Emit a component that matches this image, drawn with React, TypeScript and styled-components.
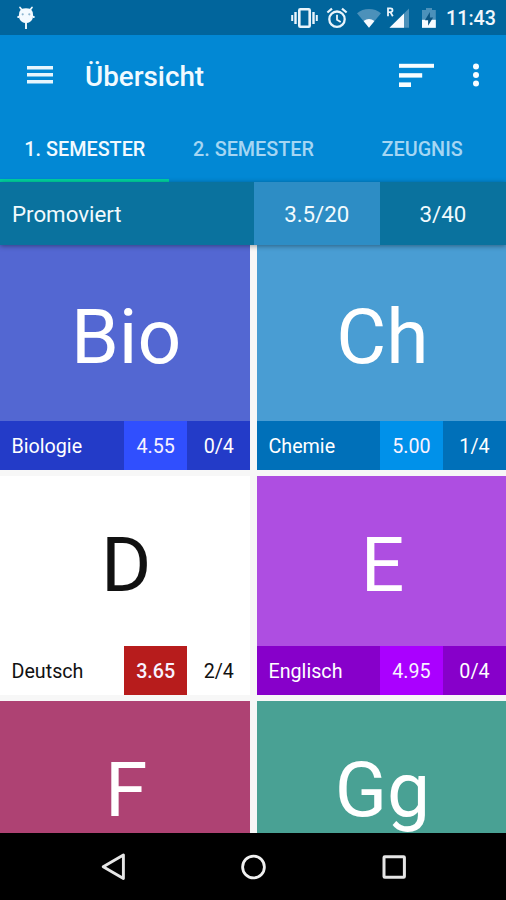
import React from 'react';
import styled, { createGlobalStyle } from 'styled-components';

const GlobalStyle = createGlobalStyle`
  * { box-sizing: border-box; }
  html, body { margin: 0; padding: 0; background: #000; }
  body { font-family: Roboto, "Liberation Sans", sans-serif; overflow: hidden; }
`;

const Screen = styled.div`
  width: 506px;
  height: 900px;
  display: flex;
  flex-direction: column;
  background: #f7f7f7;
  overflow: hidden;
`;

const StatusBar = styled.header`
  height: 35.4px;
  flex: none;
  display: flex;
  align-items: center;
  padding: 0 11px 0 17px;
  background: #01659c;
  color: #f1f7fc;
`;

const Spacer = styled.div`
  flex: 1;
`;

const Icon = styled.svg<{ $left?: number }>`
  display: block;
  flex: none;
  margin-left: ${({ $left = 0 }) => $left}px;
`;

const Clock = styled.span`
  width: 49px;
  margin-left: 9px;
  font-size: 19.7px;
  font-weight: 500;
  line-height: 36px;
  padding-top: 2px;
  white-space: nowrap;
`;

const Toolbar = styled.div`
  height: 79.6px;
  flex: none;
  display: flex;
  align-items: center;
  padding: 0 26px 0 27px;
  background: #0288d4;
  color: #f1faff;
`;

const Title = styled.h1`
  flex: 1;
  margin: 0 0 0 32px;
  padding-top: 4px;
  font-size: 27.8px;
  line-height: 32px;
  font-weight: 500;
`;

const Tabs = styled.nav`
  height: 67px;
  flex: none;
  display: grid;
  grid-template-columns: repeat(3, 1fr);
  background: #0288d4;
`;

const Tab = styled.div<{ $active?: boolean }>`
  display: flex;
  justify-content: center;
  align-items: center;
  padding: ${({ $active }) => ($active ? 5 : 2)}px 0 0 1px;
  border-bottom: ${({ $active }) => ($active ? '3px solid #00d2a0' : '0')};
  color: ${({ $active }) => ($active ? '#f2faff' : '#a5d6f3')};
  font-size: 19.8px;
  font-weight: 500;
  white-space: nowrap;
`;

const Summary = styled.section`
  height: 63px;
  flex: none;
  display: grid;
  grid-template-columns: 253.6px 126.4px 1fr;
  background: #0a729e;
  color: #f1fafd;
  font-size: 22.3px;
  position: relative;
  z-index: 1;
  box-shadow: 0 1px 5px rgba(0, 0, 0, 0.4);
`;

const SummaryCell = styled.div<{ $kind?: 'label' | 'highlight' }>`
  display: flex;
  align-items: center;
  justify-content: ${({ $kind }) => ($kind === 'label' ? 'flex-start' : 'center')};
  padding: 2px 0 0 ${({ $kind }) => ($kind === 'label' ? 12 : 0)}px;
  background: ${({ $kind }) => ($kind === 'highlight' ? '#2d8dc5' : 'transparent')};
`;

const SubjectGrid = styled.main`
  flex: 1;
  min-height: 0;
  overflow: hidden;
  display: grid;
  grid-template-columns: 250.3px 249px;
  grid-template-rows: 225px 219px 219px;
  gap: 6px 6.7px;
`;

const Tile = styled.article<{ $bg: string; $fg: string }>`
  display: flex;
  flex-direction: column;
  background: ${({ $bg }) => $bg};
  color: ${({ $fg }) => $fg};
`;

const Abbreviation = styled.div`
  flex: 1;
  display: flex;
  align-items: center;
  justify-content: center;
  padding: 8px 0 0 2px;
  font-size: 76.8px;
  line-height: 90px;
`;

const TileFooter = styled.footer<{ $bg: string }>`
  height: 49px;
  display: grid;
  grid-template-columns: 1fr 63.2px 63px;
  background: ${({ $bg }) => $bg};
  font-size: 19.7px;
`;

const SubjectName = styled.div`
  display: flex;
  align-items: center;
  padding: 3px 0 0 11.5px;
`;

const Value = styled.div<{ $bg?: string; $strong?: boolean }>`
  display: flex;
  align-items: center;
  justify-content: center;
  padding-top: 3px;
  background: ${({ $bg = 'transparent' }) => $bg};
  color: ${({ $bg }) => ($bg ? '#f8f2ff' : 'inherit')};
  font-weight: ${({ $strong }) => ($strong ? 500 : 400)};
`;

const NavigationBar = styled.footer`
  height: 66.6px;
  flex: none;
  display: flex;
  align-items: center;
  justify-content: space-between;
  padding: 0 98px;
  background: #000;
`;

type Result = {
  name: string;
  grade: string;
  tests: string;
  failing?: boolean;
};

type Subject = {
  short: string;
  bg: string;
  bar: string;
  accent: string;
  fg?: string;
  result?: Result;
};

const subjects: Subject[] = [
  { short: 'Bio', bg: '#5367d2', bar: '#233bc8', accent: '#304ffe', result: { name: 'Biologie', grade: '4.55', tests: '0/4' } },
  { short: 'Ch', bg: '#499dd3', bar: '#0070b9', accent: '#0091ea', result: { name: 'Chemie', grade: '5.00', tests: '1/4' } },
  { short: 'D', bg: '#ffffff', bar: '#ffffff', accent: '#b71c1c', fg: '#111111', result: { name: 'Deutsch', grade: '3.65', tests: '2/4', failing: true } },
  { short: 'E', bg: '#ae4ee1', bar: '#8700ca', accent: '#aa00ff', result: { name: 'Englisch', grade: '4.95', tests: '0/4' } },
  { short: 'F', bg: '#ae4273', bar: '#9b1150', accent: '#c51162' },
  { short: 'Gg', bg: '#49a194', bar: '#009078', accent: '#00bfa5' },
];

const AndroidFace = () => (
  <Icon width="18" height="24" viewBox="0 0 18 24" fill="#f4faff">
    <path d="M3 1.5 5 4M15 1.5 13 4" stroke="#f4faff" strokeWidth="1.7" strokeLinecap="round" />
    <path d="M4.2 3Q9 1.7 13.8 3Q16.3 5.5 16.2 9.8Q15.7 16.5 9 17.3Q2.3 16.5 1.8 9.8Q1.7 5.5 4.2 3Z" />
    <path d="M1.2 10v2M16.8 10v2" stroke="#f4faff" strokeWidth="1.5" />
    <path d="M9 16.5V23" stroke="#e4f2fa" strokeWidth="2" />
    <circle cx="5.7" cy="8.3" r="1.1" fill="#8eb6d0" />
    <circle cx="12.3" cy="8.3" r="1.1" fill="#8eb6d0" />
  </Icon>
);

const Vibrate = () => (
  <Icon width="27" height="22" viewBox="0 0 27 22" fill="none" stroke="#e9f4fb">
    <rect x="8.3" y="2.3" width="10.4" height="17.4" rx="1" strokeWidth="2.6" />
    <path d="M4.5 5v12M22.5 5v12" strokeWidth="2.4" />
    <path d="M1.2 8v6M25.8 8v6" strokeWidth="2" />
  </Icon>
);

const Alarm = () => (
  <Icon $left={8} width="22" height="22" viewBox="0 0 22 22" fill="none" stroke="#e9f4fb">
    <circle cx="11" cy="12.2" r="7.7" strokeWidth="2.3" />
    <path d="M11 7.7v5l3.7 2.3" strokeWidth="1.8" />
    <path d="M1.4 5.5 6 1.6M20.6 5.5 16 1.6" strokeWidth="2.2" />
  </Icon>
);

const Wifi = () => (
  <Icon $left={8} width="26" height="22" viewBox="0 0 26 22">
    <path d="M1 6.3Q6 2 13 2T25 6.3L13 20.8Z" fill="#4c91ba" />
    <path d="M7.6 14.1Q13 10 18.4 14.1L13 20.8Z" fill="#f7fbff" />
  </Icon>
);

const Signal = () => (
  <Icon $left={4} width="24" height="22" viewBox="0 0 24 22">
    <path d="M3.5 20.8 23 1.5V20.8Z" fill="#4c91ba" />
    <path d="M3.5 20.8 18 6.4V20.8Z" fill="#f7fbff" />
    <path d="M2 9.2V1.3H4.5Q6.5 1.3 6.5 3.2T4.5 5.1H2M4.4 5.1 6.8 9.2" fill="none" stroke="#e9f4fb" strokeWidth="1.8" />
  </Icon>
);

const Battery = () => (
  <Icon $left={11} width="16" height="22" viewBox="0 0 16 22">
    <path d="M5 1h6v2h3.8v17.8H1V3H5Z" fill="#4c91ba" />
    <path d="M1 12.8h13.8v8H1Z" fill="#f7fbff" />
    <path d="M8.9 5 3.9 13.2h3.2v5.5l5-8.2H8.9Z" fill="#0c5582" />
  </Icon>
);

const MenuIcon = () => (
  <Icon width="26" height="20" viewBox="0 0 26 20" fill="#e6f5fd">
    <rect y="1" width="26" height="3.5" />
    <rect y="8" width="26" height="3.5" />
    <rect y="15" width="26" height="3.5" />
  </Icon>
);

const SortIcon = () => (
  <Icon width="35" height="25" viewBox="0 0 35 25" fill="#f8fdff">
    <rect y="0.8" width="35" height="4" />
    <rect y="10.2" width="23.2" height="4.4" />
    <rect y="19.4" width="12" height="4.6" />
  </Icon>
);

const MoreIcon = () => (
  <Icon $left={38} width="8" height="24" viewBox="0 0 8 24" fill="#f8fdff">
    <circle cx="4" cy="3.4" r="3" />
    <circle cx="4" cy="12" r="3" />
    <circle cx="4" cy="20.4" r="3" />
  </Icon>
);

const BackIcon = () => (
  <Icon $left={3} width="25" height="30" viewBox="0 0 25 30" fill="none" stroke="#e6e6e6" strokeWidth="2.9">
    <path d="M2.2 14.8 22.4 3V26.6Z" strokeLinejoin="round" />
  </Icon>
);

const HomeIcon = () => (
  <Icon width="28" height="28" viewBox="0 0 28 28" fill="none" stroke="#f0f0f0" strokeWidth="2.8">
    <circle cx="14.5" cy="14" r="10.9" />
  </Icon>
);

const RecentsIcon = () => (
  <Icon width="28" height="28" viewBox="0 0 28 28" fill="none" stroke="#e6e6e6" strokeWidth="3">
    <rect x="4" y="3.8" width="20.4" height="20.4" rx="0.8" />
  </Icon>
);

const SubjectTile = ({ subject }: { subject: Subject }) => (
  <Tile $bg={subject.bg} $fg={subject.fg ?? '#ffffff'}>
    <Abbreviation>{subject.short}</Abbreviation>
    <TileFooter $bg={subject.bar}>
      {subject.result && (
        <>
          <SubjectName>{subject.result.name}</SubjectName>
          <Value $bg={subject.accent} $strong={subject.result.failing}>{subject.result.grade}</Value>
          <Value>{subject.result.tests}</Value>
        </>
      )}
    </TileFooter>
  </Tile>
);

export default function App() {
  return (
    <>
      <GlobalStyle />
      <Screen>
        <StatusBar>
          <AndroidFace />
          <Spacer />
          <Vibrate />
          <Alarm />
          <Wifi />
          <Signal />
          <Battery />
          <Clock>11:43</Clock>
        </StatusBar>
        <Toolbar>
          <MenuIcon />
          <Title>Übersicht</Title>
          <SortIcon />
          <MoreIcon />
        </Toolbar>
        <Tabs>
          <Tab $active>1. SEMESTER</Tab>
          <Tab>2. SEMESTER</Tab>
          <Tab>ZEUGNIS</Tab>
        </Tabs>
        <Summary>
          <SummaryCell $kind="label">Promoviert</SummaryCell>
          <SummaryCell $kind="highlight">3.5/20</SummaryCell>
          <SummaryCell>3/40</SummaryCell>
        </Summary>
        <SubjectGrid>
          {subjects.map((subject) => (
            <SubjectTile key={subject.short} subject={subject} />
          ))}
        </SubjectGrid>
        <NavigationBar>
          <BackIcon />
          <HomeIcon />
          <RecentsIcon />
        </NavigationBar>
      </Screen>
    </>
  );
}
